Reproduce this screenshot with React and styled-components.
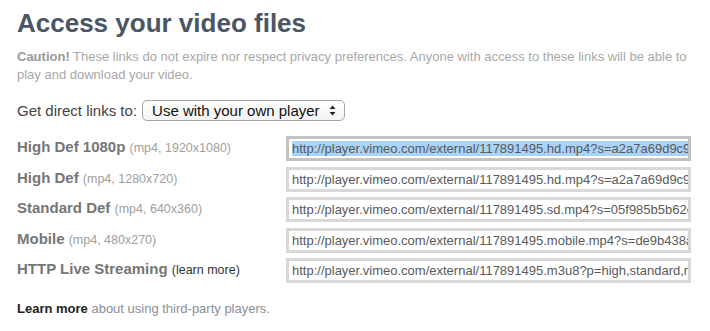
import React from 'react';
import styled, { createGlobalStyle } from 'styled-components';

const GlobalStyle = createGlobalStyle`
	html, body {
		margin: 0;
		padding: 0;
		background: #fff;
	}
	body {
		font-family: "Liberation Sans", Arial, sans-serif;
	}
`

const Page = styled.div`
	width: 710px;
	height: 331px;
	box-sizing: border-box;
	padding: 6px 17px 0 17px;
	overflow: hidden;
`

const Title = styled.h1`
	margin: 0;
	font-size: 26px;
	line-height: 34px;
	font-weight: 700;
	color: #4a5665;
`

const Caution = styled.p`
	margin: 8px 0 0 0;
	font-size: 13px;
	line-height: 18px;
	color: #a8a8a8;

	strong {
		color: #999;
	}
`

const PickerRow = styled.div`
	display: flex;
	align-items: center;
	gap: 5px;
	margin-top: 16px;
	font-size: 15px;
	color: #444;
`

const Select = styled.div`
	display: flex;
	align-items: center;
	justify-content: space-between;
	width: 203px;
	height: 21px;
	box-sizing: border-box;
	padding: 0 8px 0 9px;
	border: 1px solid #a5a5a5;
	border-radius: 5px;
	background: linear-gradient(#fff, #f3f3f3);
	color: #111;
	font-size: 15px;
`

const Links = styled.div`
	display: flex;
	flex-direction: column;
	gap: 5.5px;
	margin-top: 15px;
`

const Row = styled.div`
	display: flex;
	align-items: center;
	justify-content: space-between;
	padding-right: 2px;
`

const Label = styled.div`
	font-size: 15px;
	font-weight: 700;
	color: #767676;
	margin-top: -4px;

	small {
		font-size: 12.5px;
		font-weight: 400;
		color: #a0a0a0;
	}

	span {
		font-size: 12.5px;
		font-weight: 400;
		color: #333;
	}
`

const UrlBox = styled.div`
	width: 405px;
	height: 25px;
	box-sizing: border-box;
	border: 3px solid ${p => (p.focused ? '#c2c2c2' : '#d8d8d8')};
	background: #fff;
	padding: 0 0 0 3px;
	display: flex;
	align-items: center;
	overflow: hidden;
	white-space: nowrap;
	font-size: 13px;
	color: #5a5a5a;

	mark {
		background: #a9d3f7;
		color: #5a5a5a;
	}
`

const Footer = styled.p`
	margin: 18px 0 0 0;
	font-size: 13px;
	color: #8a8f99;

	strong {
		color: #222;
	}
`

const links = [
	{ name: 'High Def 1080p', info: '(mp4, 1920x1080)', url: 'http://player.vimeo.com/external/117891495.hd.mp4?s=a2a7a69d9c9c3f1a', focused: true },
	{ name: 'High Def', info: '(mp4, 1280x720)', url: 'http://player.vimeo.com/external/117891495.hd.mp4?s=a2a7a69d9c9c3f1a' },
	{ name: 'Standard Def', info: '(mp4, 640x360)', url: 'http://player.vimeo.com/external/117891495.sd.mp4?s=05f985b5b62e1c' },
	{ name: 'Mobile', info: '(mp4, 480x270)', url: 'http://player.vimeo.com/external/117891495.mobile.mp4?s=de9b438a1f' },
	{ name: 'HTTP Live Streaming', more: '(learn more)', url: 'http://player.vimeo.com/external/117891495.m3u8?p=high,standard,mobile' },
]

function Arrows() {
	return (
		<svg width="7" height="11" viewBox="0 0 7 11">
			<path d="M3.5 0.5 L6.5 4 L0.5 4 Z" fill="#222" />
			<path d="M3.5 10.5 L6.5 7 L0.5 7 Z" fill="#222" />
		</svg>
	)
}

export default function App() {
	return (
		<Page>
			<GlobalStyle />
			<Title>Access your video files</Title>
			<Caution>
				<strong>Caution!</strong> These links do not expire nor respect privacy preferences. Anyone with access to these links will be able to play and download your video.
			</Caution>
			<PickerRow>
				Get direct links to:
				<Select>
					Use with your own player
					<Arrows />
				</Select>
			</PickerRow>
			<Links>
				{links.map(link => (
					<Row key={link.name}>
						<Label>
							{link.name}{' '}
							{link.info && <small>{link.info}</small>}
							{link.more && <span>{link.more}</span>}
						</Label>
						<UrlBox focused={link.focused}>
							{link.focused ? <mark>{link.url}</mark> : link.url}
						</UrlBox>
					</Row>
				))}
			</Links>
			<Footer>
				<strong>Learn more</strong> about using third-party players.
			</Footer>
		</Page>
	)
}
